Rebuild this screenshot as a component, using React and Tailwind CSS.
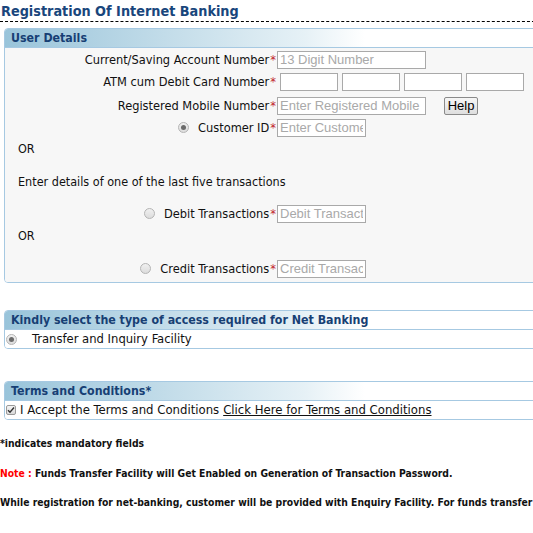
import React from 'react';

const font = "font-['DejaVu_Sans_Condensed','DejaVu_Sans',sans-serif]";
const arial = "font-['Liberation_Sans',Arial,sans-serif]";

const Radio = ({ checked }) => (
    <span className="inline-flex items-center justify-center w-[11px] h-[11px] rounded-full border border-[#b4b4b4] bg-[linear-gradient(#f0f0f0,#dcdcdc)]">
        {checked && <span className="w-[5px] h-[5px] rounded-full bg-[#6b6b6b]" />}
    </span>
);

const Star = () => <span className="text-[#c0262c] ml-[1px]">*</span>;

const Input = ({ placeholder, w = 'w-[149px]' }) => (
    <input
        className={`${w} h-[18px] border border-[#a9a9a9] bg-white px-[2px] text-[13px] ${arial} placeholder:text-[#a9a9a9] outline-none`}
        placeholder={placeholder}
        readOnly
    />
);

const Row = ({ h, label, radio, children }) => (
    <div className={`flex items-center ${h}`}>
        <div className="w-[271px] flex items-center justify-end text-[12.7px] text-[#111]">
            {radio && <span className="mr-[9px] flex"><Radio checked={radio === 'on'} /></span>}
            <span>{label}</span>
            <Star />
        </div>
        <div className="flex items-center ml-[1px]">{children}</div>
    </div>
);

const Header = ({ children }) => (
    <div className="h-[19px] flex items-center pl-[6px] border-b border-[#a6c9e2] bg-[linear-gradient(to_right,#99c4da,#e6f1f6_300px,#ffffff_360px)] text-[12.3px] font-bold text-[#173f74]">
        {children}
    </div>
);

export default function App() {
    return (
        <div className={`w-[533px] h-[533px] overflow-hidden bg-white ${font}`}>
            <h1 className="text-[14.3px] font-bold text-[#19467c] leading-[20px] pt-[1px] pl-[1px]">
                Registration Of Internet Banking
            </h1>
            <div className="border-t border-dashed border-black w-[540px]" />

            <div className="ml-[4px] mt-[6px] w-[560px] border border-[#a6c9e2] rounded-tl-[4px] rounded-bl-[4px] overflow-hidden">
                <Header>User Details</Header>
                <div className="bg-[#f7f7f7] pb-[2px]">
                    <Row h="h-[22px] pt-[1px]" label="Current/Saving Account Number">
                        <Input placeholder="13 Digit Number" />
                    </Row>
                    <Row h="h-[24px]" label="ATM cum Debit Card Number">
                        <div className="flex gap-[4px] ml-[3px]">
                            <Input w="w-[58px]" />
                            <Input w="w-[58px]" />
                            <Input w="w-[58px]" />
                            <Input w="w-[58px]" />
                        </div>
                    </Row>
                    <Row h="h-[23px]" label="Registered Mobile Number">
                        <Input placeholder="Enter Registered Mobile Number" />
                        <button className={`ml-[18px] w-[34px] h-[18px] border border-[#8a8a8a] rounded-[2px] bg-[linear-gradient(#f6f6f6,#dedede)] text-[13px] leading-[15px] text-black ${arial}`}>
                            Help
                        </button>
                    </Row>
                    <Row h="h-[21px]" label="Customer ID" radio="on">
                        <Input w="w-[89px]" placeholder="Enter Customer ID" />
                    </Row>
                    <div className="h-[22px] flex items-center pl-[13px] text-[12.5px] text-[#111]">OR</div>
                    <div className="h-[22px] mt-[11px] flex items-center pl-[13px] text-[12.5px] text-[#111]">
                        Enter details of one of the last five transactions
                    </div>
                    <Row h="h-[22px] mt-[10px]" label="Debit Transactions" radio="off">
                        <Input w="w-[89px]" placeholder="Debit Transaction" />
                    </Row>
                    <div className="h-[22px] flex items-center pl-[13px] text-[12.5px] text-[#111]">OR</div>
                    <Row h="h-[23px] mt-[10px]" label="Credit Transactions" radio="off">
                        <Input w="w-[89px]" placeholder="Credit Transaction" />
                    </Row>
                </div>
            </div>

            <div className="ml-[4px] mt-[27px] w-[560px] border border-[#a6c9e2] rounded-tl-[4px] rounded-bl-[4px] overflow-hidden">
                <Header>Kindly select the type of access required for Net Banking</Header>
                <div className="h-[18px] flex items-center bg-white text-[12.9px] text-[#111]">
                    <span className="ml-[1px] flex"><Radio checked /></span>
                    <span className="ml-[15px]">Transfer and Inquiry Facility</span>
                </div>
            </div>

            <div className="ml-[4px] mt-[32px] w-[560px] border border-[#a6c9e2] rounded-tl-[4px] rounded-bl-[4px] overflow-hidden">
                <Header>Terms and Conditions*</Header>
                <div className="h-[18px] flex items-center bg-white text-[13px] text-[#111]">
                    <span className="ml-[1px] flex items-center justify-center w-[10px] h-[10px] border border-[#9a9a9a] rounded-[2px] bg-[linear-gradient(#f4f4f4,#dadada)]">
                        <svg width="8" height="8" viewBox="0 0 8 8"><path d="M1 4.2 L3 6.2 L7 1.5" fill="none" stroke="#333" strokeWidth="1.4" /></svg>
                    </span>
                    <span className="ml-[4px]">I Accept the Terms and Conditions</span>
                    <span className="ml-[4px] underline">Click Here for Terms and Conditions</span>
                </div>
            </div>

            <div className="text-[10.3px] font-bold text-[#111] whitespace-nowrap">
                <p className="mt-[16px] h-[14px] leading-[14px]">*indicates mandatory fields</p>
                <p className="mt-[16px] h-[14px] leading-[14px]">
                    <span className="text-[#ff0000]">Note : </span>Funds Transfer Facility will Get Enabled on Generation of Transaction Password.
                </p>
                <p className="mt-[15px] h-[14px] leading-[14px]">
                    While registration for net-banking, customer will be provided with Enquiry Facility. For funds transfer
                </p>
            </div>
        </div>
    );
}
